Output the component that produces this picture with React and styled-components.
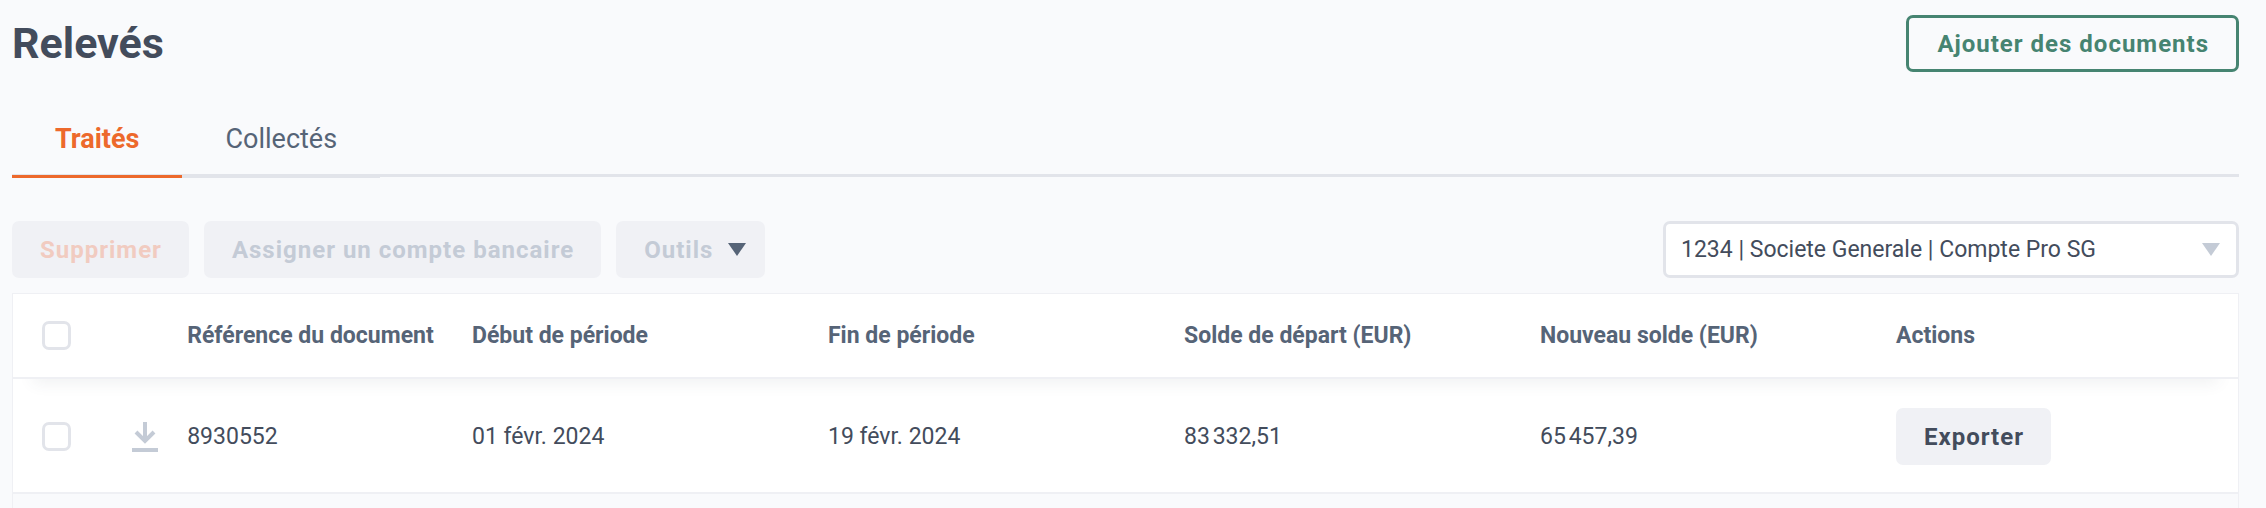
import React, { useState } from "react";
import styled, { createGlobalStyle } from "styled-components";

const statements = [
  {
    id: "8930552",
    start: "01 févr. 2024",
    end: "19 févr. 2024",
    opening: "83\u202f332,51",
    closing: "65\u202f457,39",
  },
];

const tabs = ["Traités", "Collectés"];

function DownloadIcon() {
  return (
    <svg width="26" height="30" viewBox="0 0 26 30" fill="none" aria-hidden="true">
      <path d="M13 0V19M4 10L13 19L22 10" stroke="#c4cbd6" strokeWidth="4" />
      <path d="M0 28H26" stroke="#c4cbd6" strokeWidth="4" />
    </svg>
  );
}

function Caret({ color }) {
  return (
    <svg width="18" height="13" viewBox="0 0 18 13" aria-hidden="true">
      <path d="M0 0H18L9 13Z" fill={color} />
    </svg>
  );
}

function App() {
  const [tab, setTab] = useState("Traités");

  return (
    <StPage>
      <GlobalStyle />
      <StHeader>
        <StTitle>Relevés</StTitle>
        <StOutlineButton type="button">Ajouter des documents</StOutlineButton>
      </StHeader>

      <StTabList role="tablist">
        {tabs.map((name) => (
          <StTab
            key={name}
            type="button"
            role="tab"
            aria-selected={name === tab}
            $active={name === tab}
            onClick={() => setTab(name)}
          >
            {name}
          </StTab>
        ))}
      </StTabList>

      <StToolbar>
        <StButton type="button" disabled $color="#f1cbc0">
          Supprimer
        </StButton>
        <StButton type="button" disabled $color="#c4cbd6">
          Assigner un compte bancaire
        </StButton>
        <StMenuButton type="button" disabled $color="#c4cbd6">
          Outils
          <Caret color="#566477" />
        </StMenuButton>
        <StSelectBox>
          <StSelect aria-label="Compte bancaire">
            <option>1234 | Societe Generale | Compte Pro SG</option>
          </StSelect>
          <StSelectCaret>
            <Caret color="#c4cbd6" />
          </StSelectCaret>
        </StSelectBox>
      </StToolbar>

      <StPanel>
        <StTable>
          <StHead>
            <tr>
              <StTh $width="4.7%" $first>
                <StCheckbox type="checkbox" aria-label="Tout sélectionner" />
              </StTh>
              <StTh $width="2.5%" />
              <StTh $width="12.8%">Référence du document</StTh>
              <StTh $width="16%">Début de période</StTh>
              <StTh $width="16%">Fin de période</StTh>
              <StTh $width="16%">Solde de départ (EUR)</StTh>
              <StTh $width="16%">Nouveau solde (EUR)</StTh>
              <StTh $width="16%">Actions</StTh>
            </tr>
          </StHead>
          <tbody>
            {statements.map((item) => (
              <tr key={item.id}>
                <StTd $first>
                  <StCheckbox type="checkbox" aria-label={`Sélectionner ${item.id}`} />
                </StTd>
                <StTd>
                  <StIconButton type="button" aria-label="Télécharger">
                    <DownloadIcon />
                  </StIconButton>
                </StTd>
                <StTd>{item.id}</StTd>
                <StTd>{item.start}</StTd>
                <StTd>{item.end}</StTd>
                <StTd>{item.opening}</StTd>
                <StTd>{item.closing}</StTd>
                <StTd>
                  <StButton type="button" $color="#434c5c">
                    Exporter
                  </StButton>
                </StTd>
              </tr>
            ))}
          </tbody>
        </StTable>
      </StPanel>
    </StPage>
  );
}

export default App;

const GlobalStyle = createGlobalStyle`
  * {
    box-sizing: border-box;
  }

  body {
    margin: 0;
    background-color: #f9fafc;
    color: #434c5c;
    font-family: Roboto, "Liberation Sans", sans-serif;
    font-size: 23px;
  }

  button,
  select {
    font-family: inherit;
    font-size: inherit;
  }
`;

const StPage = styled.main`
  display: flex;
  flex-direction: column;

  min-height: 100vh;

  padding: 15px 27px 0 12px;
`;

const StHeader = styled.header`
  display: flex;
  align-items: center;
  justify-content: space-between;
`;

const StTitle = styled.h1`
  margin: 0;

  font-size: 43px;
  font-weight: bold;
  line-height: 57px;
`;

const StButton = styled.button`
  height: 57px;

  border: none;
  border-radius: 7px;

  padding: 0 27px 0 28px;

  background-color: #f0f1f5;
  color: ${(props) => props.$color};

  && {
    font-size: 24px;
  }
  font-weight: bold;
  letter-spacing: 1px;
  white-space: nowrap;

  cursor: ${(props) => (props.disabled ? "default" : "pointer")};
`;

const StMenuButton = styled(StButton)`
  display: flex;
  align-items: center;
  gap: 15px;

  padding-right: 19px;
`;

const StOutlineButton = styled(StButton)`
  border: 3px solid #468471;

  background-color: transparent;
  color: #468471;
`;

const StTabList = styled.div`
  display: flex;

  margin-top: 31px;

  border-bottom: 3px solid #e2e4ea;
`;

const StTab = styled.button`
  margin-bottom: -4px;

  border: none;
  border-bottom: 3px solid ${(props) => (props.$active ? "#ed692c" : "#e2e4ea")};

  padding: 0 43px;

  background-color: transparent;
  color: ${(props) => (props.$active ? "#ed692c" : "#566477")};

  && {
    font-size: 27px;
  }
  font-weight: ${(props) => (props.$active ? "bold" : "normal")};
  line-height: 72px;

  cursor: pointer;
`;

const StToolbar = styled.div`
  display: flex;
  gap: 15px;

  margin: 44px 0 15px;
`;

const StSelectBox = styled.div`
  position: relative;

  width: 576px;

  margin-left: auto;
`;

const StSelect = styled.select`
  appearance: none;

  width: 100%;
  height: 57px;

  border: 3px solid #e2e4ea;
  border-radius: 7px;

  padding: 0 48px 0 15px;

  background-color: white;
  color: #434c5c;
`;

const StSelectCaret = styled.span`
  position: absolute;
  top: 0;
  right: 19px;
  bottom: 0;

  display: flex;
  align-items: center;

  pointer-events: none;
`;

const StPanel = styled.section`
  flex: 1;

  border: 1px solid #eff0f4;
  border-bottom: none;
`;

const StTable = styled.table`
  width: 100%;

  border-spacing: 0;
  table-layout: fixed;
`;

// keeps the header shadow above the first row
const StHead = styled.thead`
  position: relative;
  z-index: 1;

  box-shadow: 0 24px 16px -20px rgba(67, 76, 92, 0.08);
`;

const StTh = styled.th`
  width: ${(props) => props.$width};
  height: 85px;

  border-bottom: 2px solid #eff0f4;

  padding: 0 0 0 ${(props) => (props.$first ? "29px" : "14px")};

  background-color: white;
  color: #566477;

  text-align: left;
  white-space: nowrap;
`;

const StTd = styled.td`
  border-bottom: 2px solid #eff0f4;

  padding: 29px 0 27px ${(props) => (props.$first ? "29px" : "14px")};

  background-color: white;
`;

const StCheckbox = styled.input`
  appearance: none;

  display: block;

  width: 29px;
  height: 29px;

  margin: 0;

  border: 3px solid #e2e4ea;
  border-radius: 7px;

  background-color: white;

  &:checked {
    background-color: #468471;
  }
`;

const StIconButton = styled.button`
  display: flex;

  border: none;

  padding: 0;

  background-color: transparent;

  cursor: pointer;
`;
